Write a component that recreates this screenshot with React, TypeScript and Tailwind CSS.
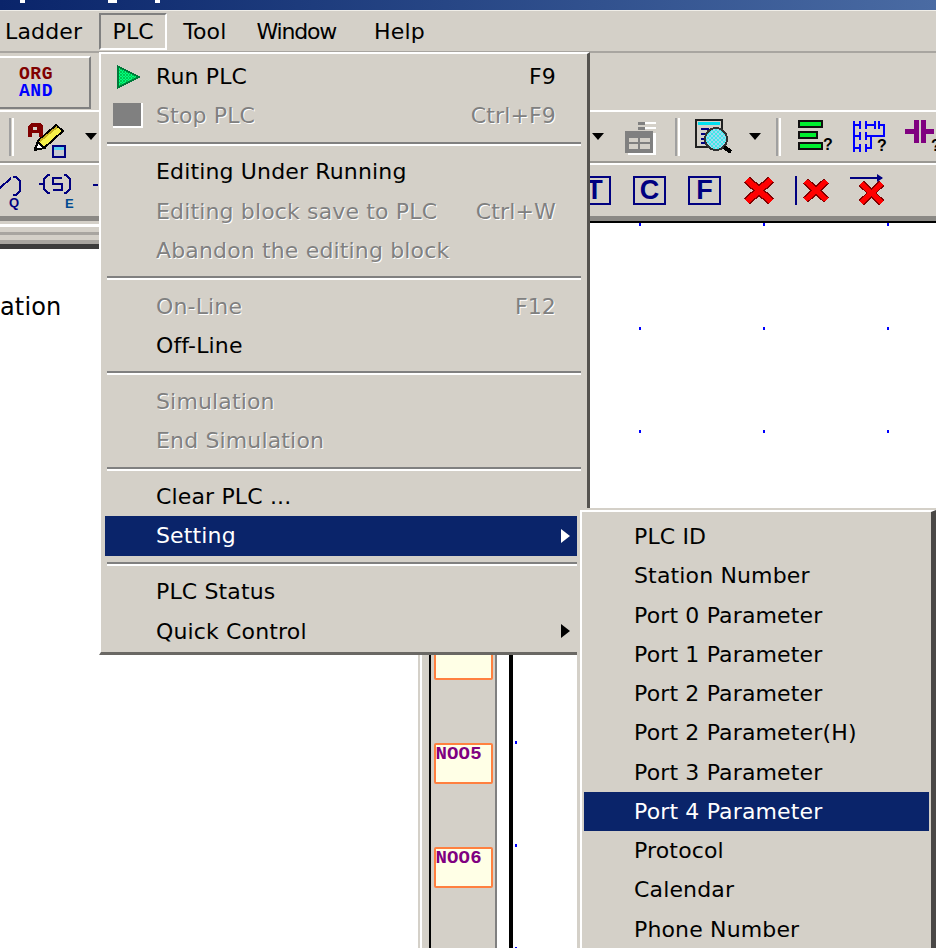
import { ReactNode } from "react";

type Item = { label: string; key?: string; off?: boolean; sub?: boolean; icon?: ReactNode; active?: boolean };

const RunIcon = () => (
  <svg width="24" height="24" viewBox="0 0 24 24" className="ml-[4px]" shapeRendering="crispEdges">
    <defs>
      <pattern id="runDither" width="3" height="3" patternUnits="userSpaceOnUse">
        <rect width="3" height="3" fill="#00ff80" />
        <rect width="1.5" height="1.5" fill="#00c850" />
        <rect x="1.5" y="1.5" width="1.5" height="1.5" fill="#00c850" />
      </pattern>
    </defs>
    <polygon points="0,0 24,12 0,24" fill="#007a3a" />
    <polygon points="2,3 20,12 2,21" fill="url(#runDither)" />
  </svg>
);

const StopIcon = () => (
  <div className="w-[30px] h-[25px] bg-[#808080] border-r-2 border-b-2 border-white" />
);

const mainItems: (Item | "sep")[] = [
  { label: "Run PLC", key: "F9", icon: <RunIcon /> },
  { label: "Stop PLC", key: "Ctrl+F9", off: true, icon: <StopIcon /> },
  "sep",
  { label: "Editing Under Running" },
  { label: "Editing block save to PLC", key: "Ctrl+W", off: true },
  { label: "Abandon the editing block", off: true },
  "sep",
  { label: "On-Line", key: "F12", off: true },
  { label: "Off-Line" },
  "sep",
  { label: "Simulation", off: true },
  { label: "End Simulation", off: true },
  "sep",
  { label: "Clear PLC ..." },
  { label: "Setting", sub: true, active: true },
  "sep",
  { label: "PLC Status" },
  { label: "Quick Control", sub: true },
];

const subItems: Item[] = [
  { label: "PLC ID" },
  { label: "Station Number" },
  { label: "Port 0 Parameter" },
  { label: "Port 1 Parameter" },
  { label: "Port 2 Parameter" },
  { label: "Port 2 Parameter(H)" },
  { label: "Port 3 Parameter" },
  { label: "Port 4 Parameter", active: true },
  { label: "Protocol" },
  { label: "Calendar" },
  { label: "Phone Number" },
];

function MenuRow({ item, textLeft }: { item: Item; textLeft: string }) {
  const color = item.active ? "bg-[#0a246a] text-white" : item.off ? "text-[#808080] [text-shadow:1px_1px_0_#ffffff]" : "text-black";
  return (
    <div className={`relative h-[39.25px] flex items-center ${textLeft} ${color}`}>
      {item.icon && <div className="absolute left-[8px] top-0 bottom-0 flex items-center">{item.icon}</div>}
      <span className="flex-1 whitespace-nowrap">{item.label}</span>
      {item.key && <span className="mr-[27px] whitespace-nowrap">{item.key}</span>}
      {item.sub && (
        <span
          className={`absolute right-[13px] w-0 h-0 border-y-[7px] border-y-transparent border-l-[9px] ${item.active ? "border-l-white" : "border-l-black"}`}
        />
      )}
    </div>
  );
}

const Sep = () => (
  <div className="h-[16.7px] flex flex-col justify-center px-[2px]">
    <div className="h-[2px] bg-[#808080]" />
    <div className="h-[2px] bg-white" />
  </div>
);

function Separator() {
  return <div className="w-[5px] h-[38px] border-l-2 border-[#a0a0a0] border-r-2 border-r-white shrink-0" />;
}

function Caret() {
  return <div className="w-0 h-0 border-x-[6px] border-x-transparent border-t-[7px] border-t-black shrink-0" />;
}

function Question({ className }: { className: string }) {
  return <span className={`absolute text-[16px] leading-none font-bold text-black font-['Liberation_Sans',sans-serif] ${className}`}>?</span>;
}

function PencilIcon() {
  return (
    <svg width="40" height="36" viewBox="0 0 40 36" className="shrink-0 mt-[6px]" shapeRendering="crispEdges">
      <path d="M1 15V4l3-3h9l3 3v11h-4v-4H5v4z" fill="#800000" />
      <rect x="6" y="5" width="4" height="3" fill="#d4d0c8" />
      <path d="M8 27 11 19 29 3 36 9 17 26z" fill="#f6f04a" stroke="#000" strokeWidth="2" />
      <path d="M8 28 11 20 17 26z" fill="#ffffff" stroke="#000" strokeWidth="2" />
      <path d="M13 19 30 5" stroke="#c8b020" strokeWidth="2" />
      <rect x="26" y="24" width="12" height="11" fill="#c8c8d0" stroke="#000080" strokeWidth="2" />
      <rect x="27" y="25" width="10" height="3" fill="#5bd0f0" />
    </svg>
  );
}

function ToolSetIcon() {
  return (
    <svg width="34" height="38" viewBox="0 0 34 38" className="shrink-0" shapeRendering="crispEdges">
      <path d="M14 5h7M14 10h7" stroke="#808080" strokeWidth="3" />
      <path d="M21 5h11M21 10h11" stroke="#ffffff" strokeWidth="2" />
      <rect x="4" y="15" width="28" height="22" fill="#ffffff" />
      <rect x="1" y="13" width="28" height="22" fill="#808080" />
      <rect x="5" y="20" width="21" height="11" fill="#d4d0c8" />
      <path d="M5 25h21M15 20v11" stroke="#808080" strokeWidth="2" />
    </svg>
  );
}

function MagnifyIcon() {
  return (
    <svg width="38" height="36" viewBox="0 0 38 36" className="shrink-0" shapeRendering="crispEdges">
      <defs>
        <pattern id="lensDither" width="4" height="4" patternUnits="userSpaceOnUse">
          <rect width="4" height="4" fill="#40e8e8" />
          <rect width="2" height="2" fill="#a0d8f0" />
          <rect x="2" y="2" width="2" height="2" fill="#a0d8f0" />
        </pattern>
      </defs>
      <rect x="1" y="1" width="26" height="27" fill="#d4d0c8" stroke="#202020" strokeWidth="2" />
      <rect x="3" y="3" width="22" height="3" fill="#00e0f0" />
      <path d="M6 10h8M6 15h5M6 20h5M6 24h5" stroke="#000080" strokeWidth="2" />
      <circle cx="21" cy="20" r="11" fill="url(#lensDither)" stroke="#303030" strokeWidth="2" />
      <path d="M29 28l7 5" stroke="#000" strokeWidth="4" />
    </svg>
  );
}

function StatusQueryIcon() {
  return (
    <div className="relative w-[36px] h-[34px] shrink-0">
      <svg width="25" height="30" viewBox="0 0 25 30" className="block" shapeRendering="crispEdges">
        <rect x="1" y="1" width="23" height="6" fill="#00f030" stroke="#101010" strokeWidth="2" />
        <rect x="1" y="12" width="18" height="6" fill="#00f030" stroke="#101010" strokeWidth="2" />
        <rect x="1" y="23" width="23" height="6" fill="#00f030" stroke="#101010" strokeWidth="2" />
      </svg>
      <Question className="left-[25px] top-[17px]" />
    </div>
  );
}

function LadderQueryIcon() {
  return (
    <div className="relative w-[36px] h-[34px] shrink-0">
      <svg width="33" height="33" viewBox="0 0 33 33" className="block" shapeRendering="crispEdges">
        <path d="M2 1v31M2 5h6M8 1v8M14 1v8M14 5h9M23 1v8M27 1v8M27 5h5v11H19v12h-5M14 24v8M8 24v8M2 28h6M2 16h6M8 12v8M14 12v8M14 16h5" stroke="#0000ff" strokeWidth="2" fill="none" />
      </svg>
      <Question className="left-[25px] top-[18px]" />
    </div>
  );
}

function ContactIcon() {
  return (
    <div className="relative w-[30px] h-[34px] shrink-0">
      <svg width="29" height="23" viewBox="0 0 29 23" className="block" shapeRendering="crispEdges">
        <path d="M0 11h11M18 11h11" stroke="#800080" strokeWidth="5" />
        <path d="M11 0v23M18 0v23" stroke="#800080" strokeWidth="5" />
      </svg>
      <Question className="left-[26px] top-[18px]" />
    </div>
  );
}

function BoxLetter({ ch }: { ch: string }) {
  return (
    <div className="w-[33px] h-[29px] shrink-0 border-2 border-[#000080] flex items-center justify-center text-[#000080] font-bold text-[27px] leading-none font-['Liberation_Sans',sans-serif]">
      {ch}
    </div>
  );
}

function RedX({ w, h }: { w: number; h: number }) {
  return (
    <svg width={w} height={h} viewBox="0 0 32 32" preserveAspectRatio="none" className="shrink-0" shapeRendering="crispEdges">
      <path d="M4 4 28 28M28 4 4 28" stroke="#800000" strokeWidth="9" />
      <path d="M4 4 28 28M28 4 4 28" stroke="#ff0000" strokeWidth="6" />
    </svg>
  );
}

function CoilIcon({ sub }: { sub: string }) {
  return (
    <div className="relative w-[36px] h-[36px] shrink-0">
      <svg width="36" height="20" viewBox="0 0 36 20" className="block mt-[3px]" shapeRendering="crispEdges">
        <path d="M0 10h5M11 1H9L5 5v10l4 4h2M25 1h2l4 4v10l-4 4h-2" stroke="#000080" strokeWidth="2" fill="none" />
        <path d="M23 4h-9v6h9v6h-9" stroke="#000080" strokeWidth="2" fill="none" />
      </svg>
      <span className="absolute left-[26px] top-[23px] text-[13px] leading-none font-bold text-[#004a90] font-['Liberation_Sans',sans-serif]">{sub}</span>
    </div>
  );
}

function CoilSlash() {
  return (
    <div className="relative w-[22px] h-[36px] shrink-0">
      <svg width="22" height="20" viewBox="0 0 22 20" className="block mt-[3px]" shapeRendering="crispEdges">
        <path d="M0 12 11 2M13 1h3l4 4v10l-4 4h-3" stroke="#000080" strokeWidth="2" fill="none" />
      </svg>
      <span className="absolute left-[9px] top-[23px] text-[13px] leading-none font-bold text-[#000080] font-['Liberation_Sans',sans-serif]">Q</span>
    </div>
  );
}

function NopBox({ label }: { label: string }) {
  return (
    <div className="h-[41px] w-[59px] shrink-0 bg-[#ffffe6] border-2 border-[#ff8040] rounded-[2px] text-[#800080] text-[19px] leading-[18px] font-bold font-['Liberation_Mono',monospace] overflow-hidden">
      {label}
    </div>
  );
}

const dotsX = [515, 639, 763, 887];
const dotsY = [223, 327, 430, 534, 637, 741, 844, 947];

export default function App() {
  return (
    <div className="relative w-[936px] h-[948px] overflow-hidden bg-[#d4d0c8] font-['DejaVu_Sans',sans-serif] text-[22px] tracking-[0.15px] text-black">
      {/* title bar */}
      <div className="relative h-[10px] bg-gradient-to-r from-[#0a246a] to-[#4a6ba3]">
        <div className="absolute left-[20px] top-0 w-[5px] h-[3px] bg-white" />
        <div className="absolute left-[108px] top-0 w-[9px] h-[3px] bg-white" />
        <div className="absolute left-[155px] top-0 w-[5px] h-[3px] bg-white" />
      </div>

      {/* menu bar */}
      <div className="h-[41px] flex items-center pl-[5px] border-t border-[#f0eee8]">
        <span>Ladder</span>
        <span className="ml-[17px] h-[37px] w-[68px] flex items-center justify-center border-2 border-t-[#808080] border-l-[#808080] border-r-white border-b-white">PLC</span>
        <span className="ml-[16px]">Tool</span>
        <span className="ml-[30px] tracking-[-1.2px]">Window</span>
        <span className="ml-[38px]">Help</span>
      </div>

      {/* toolbar 1 */}
      <div className="h-[59px] border-t-2 border-t-[#a8a5a0] flex items-start pt-[3px]">
        <div className="w-[91px] h-[53px] pr-[17px] border-t-2 border-t-white border-r-2 border-r-[#808080] border-b-2 border-b-[#808080] flex flex-col items-center justify-center text-[18px] tracking-[0.5px] leading-[17px] font-bold font-['Liberation_Mono',monospace]">
          <span className="text-[#800000]">ORG</span>
          <span className="text-[#0000ff]">AND</span>
        </div>
      </div>

      {/* toolbar 2 */}
      <div className="h-[53px] border-t-2 border-t-white border-b-2 border-b-[#9a9893] flex items-center pl-[9px]">
        <Separator />
        <div className="ml-[13px]"><PencilIcon /></div>
        <div className="ml-[18px]"><Caret /></div>
        <div className="ml-[495px]"><Caret /></div>
        <div className="ml-[20px]"><ToolSetIcon /></div>
        <div className="ml-[17px]"><Separator /></div>
        <div className="ml-[15px]"><MagnifyIcon /></div>
        <div className="ml-[16px]"><Caret /></div>
        <div className="ml-[15px]"><Separator /></div>
        <div className="ml-[17px]"><StatusQueryIcon /></div>
        <div className="ml-[18px]"><LadderQueryIcon /></div>
        <div className="ml-[17px]"><ContactIcon /></div>
      </div>

      {/* toolbar 3 */}
      <div className="h-[53px] border-t-2 border-t-white flex items-center">
        <CoilSlash />
        <div className="ml-[17px]"><CoilIcon sub="E" /></div>
        <div className="ml-[18px] w-[5px] h-[2px] bg-[#000080] mb-[12px]" />
        <div className="ml-[480px] flex items-center">
          <BoxLetter ch="T" />
          <div className="ml-[22px]"><BoxLetter ch="C" /></div>
          <div className="ml-[22px]"><BoxLetter ch="F" /></div>
          <div className="ml-[22px]"><RedX w={32} h={29} /></div>
          <div className="ml-[20px] w-[2px] h-[29px] bg-[#000080]" />
          <div className="ml-[5px]"><RedX w={28} h={25} /></div>
          <div className="relative ml-[20px] w-[35px] h-[30px] flex items-end justify-end">
            <div className="absolute left-0 top-[1px] w-[32px] h-[2px] bg-[#000080]" />
            <div className="absolute left-[27px] top-[-2px] w-0 h-0 border-y-[4px] border-y-transparent border-l-[6px] border-l-[#000080]" />
            <RedX w={27} h={26} />
          </div>
        </div>
      </div>

      {/* thick band above the workspace */}
      <div className="h-[5px] bg-[#8b8985]" />

      {/* workspace */}
      <div className="relative h-[729px] flex">
        <div className="w-[418px] flex flex-col">
          <div className="h-[28px] flex flex-col">
            <div className="h-[3px] bg-[#d4d0c8]" />
            <div className="h-[3px] bg-white" />
            <div className="h-[5px] bg-[#d4d0c8]" />
            <div className="h-[3px] bg-[#a8a5a0]" />
            <div className="h-[5px] bg-[#d4d0c8]" />
            <div className="h-[4px] bg-[#a8a5a0]" />
            <div className="h-[5px] bg-[#3c3c3c]" />
          </div>
          <div className="flex-1 bg-white pt-[44px] pl-0 text-[24px] leading-[28px]">ation</div>
        </div>
        <div className="w-[2px] bg-[#d4d0c8]" />
        <div className="w-[2px] bg-white" />
        <div className="w-[7px] bg-[#d4d0c8]" />
        <div className="w-[68px] bg-[#d4d0c8] border-l-2 border-black border-r-2 border-r-[#808080] flex flex-col items-center gap-[63px] pt-[2px]">
          <NopBox label="NOO0" />
          <NopBox label="NOO1" />
          <NopBox label="NOO2" />
          <NopBox label="NOO3" />
          <NopBox label="NOO4" />
          <NopBox label="NOO5" />
          <NopBox label="NOO6" />
        </div>
        <div className="w-[12px] bg-white" />
        <div className="w-[4px] bg-black" />
        <div className="flex-1 bg-white border-t-2 border-black" />
      </div>

      {dotsX.flatMap((x) =>
        dotsY.map((y) => (
          <div key={`${x}-${y}`} className="absolute w-[2px] h-[3px] bg-[#0000ff]" style={{ left: x, top: y }} />
        ))
      )}

      {/* PLC menu */}
      <div className="absolute left-[99px] top-[52px] w-[491px] h-[603px] bg-[#d4d0c8] border-t-2 border-l-2 border-t-white border-l-white border-r-[3px] border-b-[3px] border-r-[#55534f] border-b-[#6a6864] px-[4px] pt-[3px]">
        {mainItems.map((item, i) =>
          item === "sep" ? <Sep key={i} /> : <MenuRow key={i} item={item} textLeft="pl-[51px]" />
        )}
      </div>

      {/* Setting submenu */}
      <div className="absolute left-[577px] top-[508px] w-[359px] bg-[#d4d0c8] pl-[3px] pt-[2px]">
        <div className="h-[450px] bg-[#d4d0c8] border-t-[2px] border-l-2 border-t-white border-l-white border-r-[5px] border-r-[#4a4846] px-[2px] pt-[5px]">
          {subItems.map((item) => (
            <MenuRow key={item.label} item={item} textLeft="pl-[50px]" />
          ))}
        </div>
      </div>
    </div>
  );
}
